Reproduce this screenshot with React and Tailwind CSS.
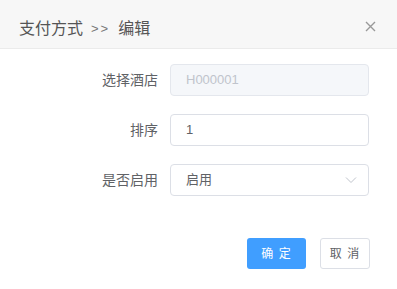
import React from 'react';

const font = "font-['Liberation_Sans','Noto_Sans_CJK_SC',sans-serif]";

const FormRow = ({ label, children }) => (
  <div className="flex items-center">
    <label className="w-[170px] pr-[12px] text-right text-[14px] leading-[32px] text-[#606266]">{label}</label>
    {children}
  </div>
);

const App = () => {
  return (
    <div className={`w-[397px] h-[289px] bg-white ${font}`}>
      {/* Header */}
      <div className="h-[49px] bg-[#f7f7f7] border-b border-[#ebebeb] flex items-center justify-between pl-[19px] pr-[21px]">
        <span className="flex items-center text-[16px] text-[#555] leading-none pt-[9px]">
          <span>支付方式</span>
          <span className="mx-[8px] text-[13px] tracking-[2px] text-[#777]">&gt;&gt;</span>
          <span>编辑</span>
        </span>
        <svg width="11" height="11" viewBox="0 0 11 11" className="mt-[4px]">
          <path d="M1 1L10 10M10 1L1 10" stroke="#999" strokeWidth="1.4" />
        </svg>
      </div>

      {/* Form */}
      <div className="pt-[15px] flex flex-col gap-[18px]">
        <FormRow label="选择酒店">
          <div className="w-[199px] h-[32px] rounded-[4px] border border-[#e4e7ed] bg-[#f5f7fa] px-[15px] flex items-center text-[13px] text-[#c0c4cc]">
            H000001
          </div>
        </FormRow>
        <FormRow label="排序">
          <div className="w-[199px] h-[32px] rounded-[4px] border border-[#dcdfe6] bg-white px-[15px] flex items-center text-[13px] text-[#606266]">
            1
          </div>
        </FormRow>
        <FormRow label="是否启用">
          <div className="w-[199px] h-[32px] rounded-[4px] border border-[#dcdfe6] bg-white pl-[15px] pr-[11px] flex items-center justify-between text-[13px] text-[#606266]">
            <span>启用</span>
            <svg width="12" height="8" viewBox="0 0 12 8">
              <path d="M1 1.5L6 6.5L11 1.5" fill="none" stroke="#c0c4cc" strokeWidth="1" />
            </svg>
          </div>
        </FormRow>
      </div>

      {/* Footer */}
      <div className="flex justify-end gap-[14px] pr-[27px] pt-[42px]">
        <button className="w-[59px] h-[31px] rounded-[3px] bg-[#409eff] text-white text-[12px] tracking-[1px]">确 定</button>
        <button className="w-[50px] h-[31px] rounded-[3px] border border-[#dcdfe6] bg-white text-[#606266] text-[12px] tracking-[1px]">取 消</button>
      </div>
    </div>
  );
};

export default App;
